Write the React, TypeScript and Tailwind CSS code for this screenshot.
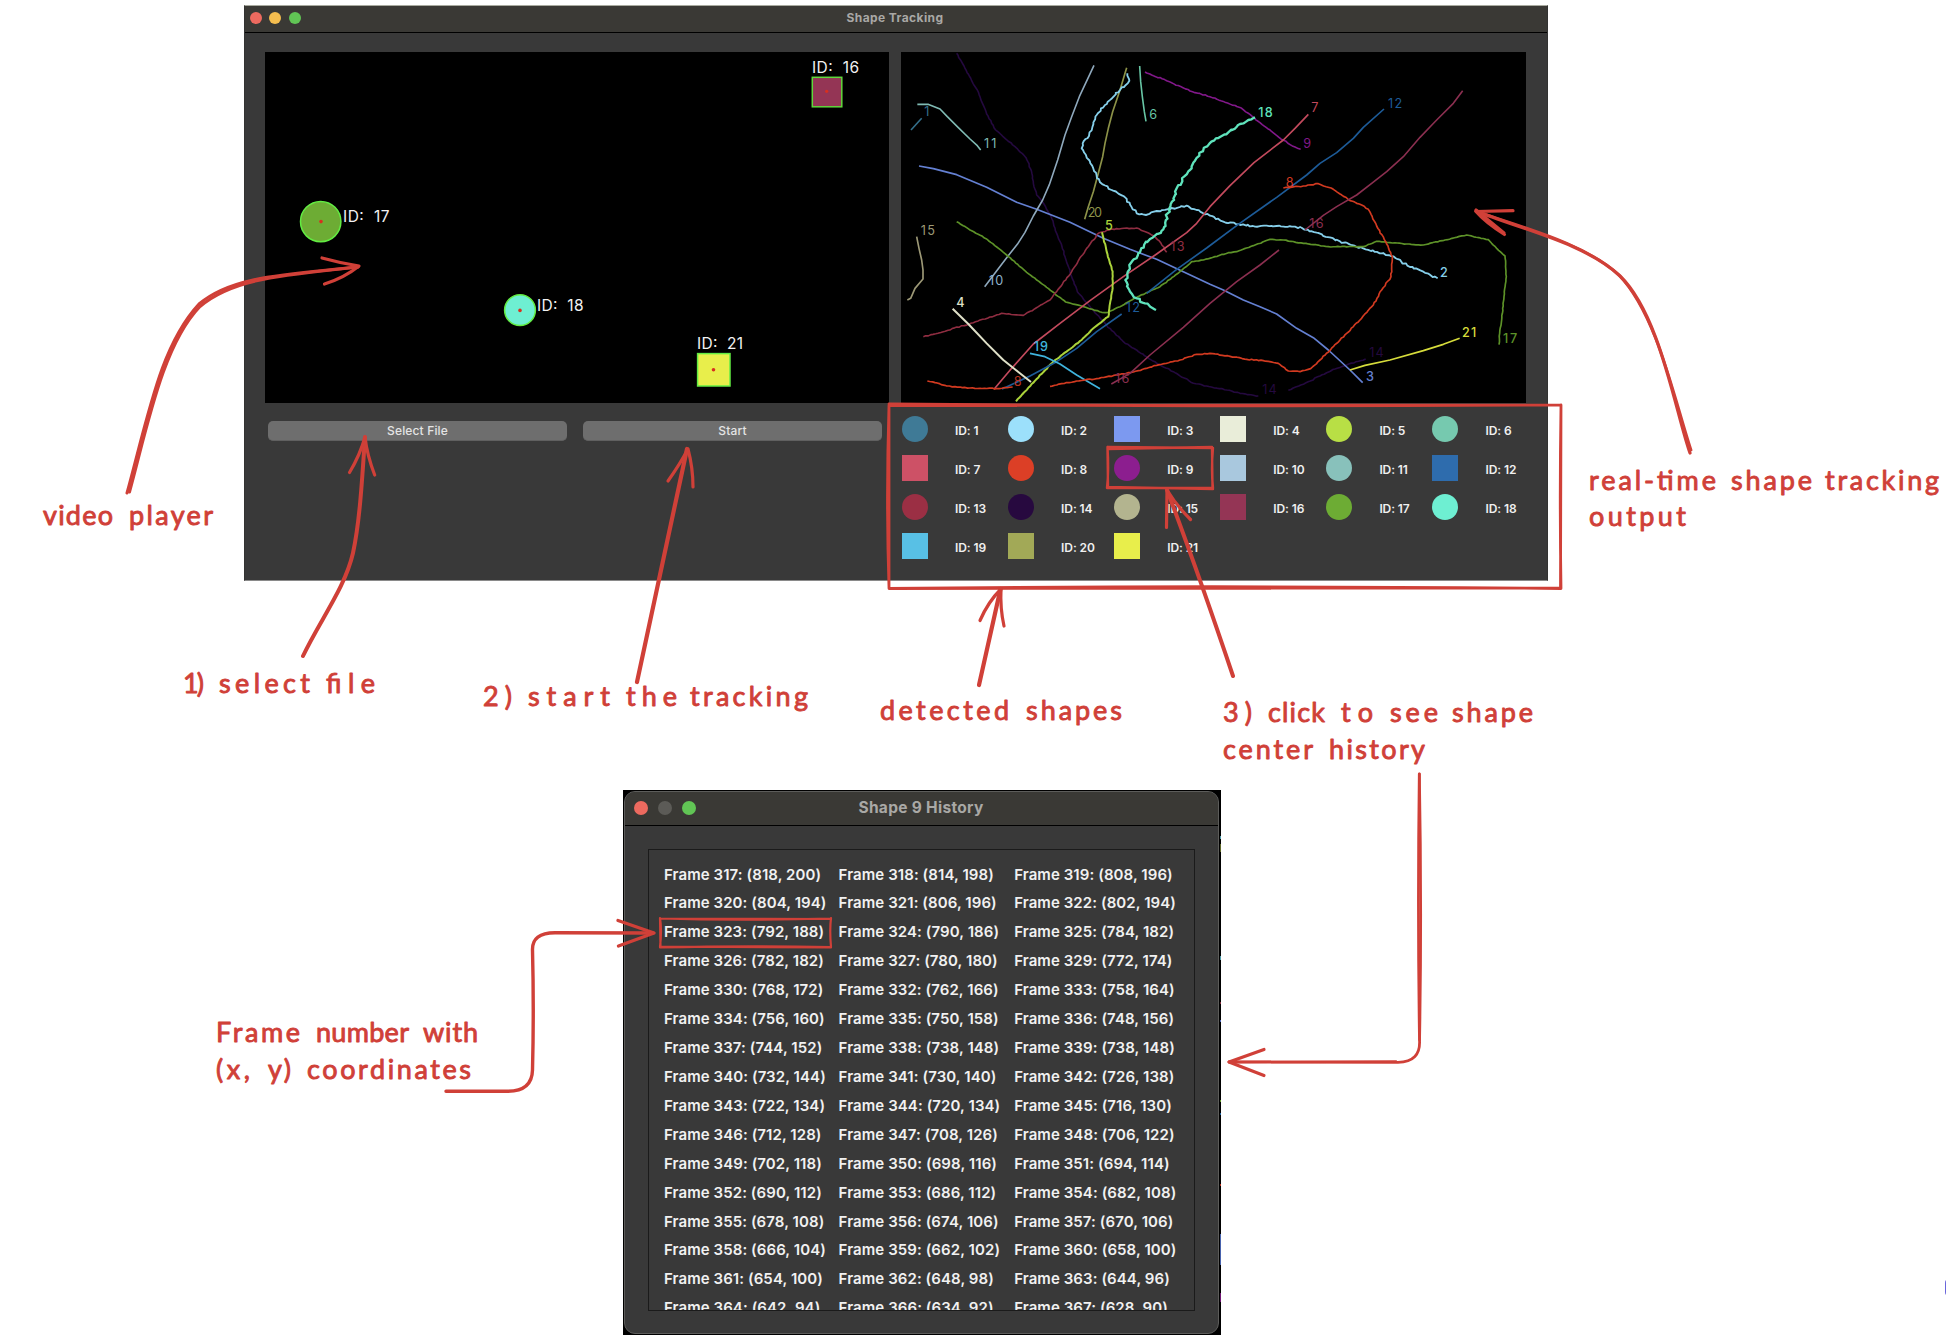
import React from "react";

type Kind = "circle" | "square";
type Shape = { id: number; kind: Kind; color: string };

const shapes: Shape[] = [
  { id: 1, kind: "circle", color: "#3f7a96" },
  { id: 2, kind: "circle", color: "#9ce0fb" },
  { id: 3, kind: "square", color: "#7c99f0" },
  { id: 4, kind: "square", color: "#e9edd9" },
  { id: 5, kind: "circle", color: "#b8df45" },
  { id: 6, kind: "circle", color: "#76c9af" },
  { id: 7, kind: "square", color: "#cd5166" },
  { id: 8, kind: "circle", color: "#dc3f26" },
  { id: 9, kind: "circle", color: "#8c1e8f" },
  { id: 10, kind: "square", color: "#a9c8de" },
  { id: 11, kind: "circle", color: "#88c1bb" },
  { id: 12, kind: "square", color: "#2e6cad" },
  { id: 13, kind: "circle", color: "#9b2f44" },
  { id: 14, kind: "circle", color: "#27093f" },
  { id: 15, kind: "circle", color: "#b3b48f" },
  { id: 16, kind: "square", color: "#943555" },
  { id: 17, kind: "circle", color: "#6dac34" },
  { id: 18, kind: "circle", color: "#6eefd2" },
  { id: 19, kind: "square", color: "#58c0e5" },
  { id: 20, kind: "square", color: "#a2a957" },
  { id: 21, kind: "square", color: "#e8ee4b" },
];

type Track = { color: string; pts: number[]; w?: number; rough?: number };

const tracks: Track[] = [
  { color: "#24093f", pts: [200,40,222,78,245,122,262,150,275,185,290,222,317,270,345,295,375,320,408,353,424,392,432,440,440,465,462,492,485,535,500,580,514,612,525,650,545,710,562,755,600,800,650,856,700,905,745,935,800,970,850,995,910,1030,950,1038,1010,1050,1050,1060,1105,1068], rough: 1.5 },
  { color: "#24093f", pts: [1195,1051,1240,1033,1290,1008,1335,987,1370,975,1427,957], rough: 1.5 },
  { color: "#34708c", pts: [63,270,95,235] },
  { color: "#7fbab3", pts: [82,193,114,193,150,207,172,230,205,263,240,297,262,317,272,330] },
  { color: "#6480d2", pts: [87,378,130,386,200,404,290,442,380,487,440,508,540,547,640,595,720,628,800,658,880,695,960,733,1000,750,1060,780,1110,800,1160,822,1220,865,1270,893,1315,930,1380,990,1418,1028], w: 5 },
  { color: "#8fa9bd", pts: [612,76,568,170,545,230,525,285,503,360,478,434,458,480,430,528,405,577,382,613,350,653,318,695,284,740] },
  { color: "#8c9248", pts: [710,83,690,150,668,215,655,265,645,310,638,350,625,400,610,455,595,500,584,538], w: 5 },
  { color: "#86cfea", pts: [712,100,718,122,690,150,645,195,620,225,607,262,597,288,578,310,575,325,600,365,630,427,665,450,703,470,740,520,768,525,800,513,840,508,890,497,920,510,960,527,1000,545,1045,552,1095,560,1130,557,1215,560,1280,578,1350,604,1420,625,1475,640,1510,649,1552,677,1600,695,1643,715], w: 5.5, rough: 3 },
  { color: "#67c6a5", pts: [749,78,752,125,757,170,763,215,768,244] },
  { color: "#82188a", pts: [765,96,830,122,900,153,960,170,1055,205,1110,248,1180,301,1215,321,1232,328], rough: 1.5 },
  { color: "#9c9876", pts: [80,590,87,625,95,660,99,690,99,717,75,745,62,775,52,780], w: 5 },
  { color: "#5d9228", pts: [200,545,245,572,290,597,350,645,410,697,470,742,527,786,580,800,635,817,655,817,690,800,740,772,810,740,870,695,905,665,940,660,1015,638,1040,635,1090,617,1140,598,1180,600,1240,610,1315,620,1420,620,1460,604,1500,608,1550,612,1600,615,1665,600,1730,585,1795,599,1820,625,1845,648,1849,710,1842,770,1835,840,1829,880,1827,914], w: 5, rough: 1 },
  { color: "#8f2d41", pts: [100,890,160,875,250,848,335,820,400,826,445,800,480,780,500,755,545,695,590,625,625,580,665,567,740,564,790,587,812,608,830,637], rough: 1.5 },
  { color: "#c34a5d", pts: [312,1048,365,985,430,912,510,850,600,782,700,710,800,642,890,578,920,550,960,500,1020,437,1092,368,1150,323,1180,300,1215,265,1255,223], w: 5 },
  { color: "#abd33b", pts: [636,577,650,635,668,695,668,745,660,790,655,830,610,865,575,900,490,965,440,1017,378,1084], w: 6, rough: 1 },
  { color: "#1d5b98", pts: [770,760,860,688,950,624,1045,553,1160,472,1250,405,1290,370,1340,338,1390,295,1420,262,1482,207], w: 5 },
  { color: "#1d5b98", pts: [336,1047,420,1008,500,965,560,925,620,875,695,822], w: 5 },
  { color: "#dfe0c8", pts: [188,806,235,852,290,910,340,960,385,996,423,1026], w: 6 },
  { color: "#3fb4dd", pts: [420,940,465,950,510,972,560,1005,630,1046], w: 5 },
  { color: "#d23a20", pts: [112,1023,135,1028,170,1038,195,1040,240,1044,320,1046,368,1041], w: 5, rough: 1.5 },
  { color: "#d23a20", pts: [480,1039,515,1031,560,1023,620,1016,730,996,800,976,870,960,920,943,960,940,1020,949,1070,958,1120,962,1165,970,1195,993,1230,995,1262,986,1290,960,1330,920,1370,880,1410,840,1450,795,1475,750,1503,710,1507,650,1487,605,1460,558,1435,508,1415,495,1380,482,1330,448,1285,431,1240,438,1180,444], w: 5, rough: 1.5 },
  { color: "#8b2f50", pts: [1718,152,1690,190,1640,240,1590,292,1540,350,1490,395,1445,430,1400,465,1340,500,1300,526,1245,570] },
  { color: "#8b2f50", pts: [1167,630,1110,675,1040,725,960,790,880,862,780,945,720,1000,664,1032] },
  { color: "#5fe3bc", pts: [1095,232,1075,240,1050,252,1015,277,985,294,955,315,935,335,915,362,905,385,882,410,860,445,846,485,833,520,820,568,780,597,745,640,718,675,712,700,706,720,718,750,740,775,765,790,798,810], w: 7, rough: 4 },
  { color: "#d6dc3b", pts: [1380,990,1425,976,1500,960,1600,932,1660,913,1709,895], w: 5 },
];

const trackLabels: { n: string; x: number; y: number; color: string; bold?: boolean }[] = [
  { n: "1", x: 103, y: 228, color: "#34708c" },
  { n: "11", x: 282, y: 325, color: "#7fbab3" },
  { n: "6", x: 778, y: 238, color: "#67c6a5" },
  { n: "15", x: 92, y: 586, color: "#9c9876" },
  { n: "10", x: 297, y: 735, color: "#8fb2cc" },
  { n: "20", x: 593, y: 532, color: "#8c9248" },
  { n: "5", x: 645, y: 571, color: "#abd33b", bold: true },
  { n: "13", x: 841, y: 633, color: "#8f2d41" },
  { n: "4", x: 199, y: 801, color: "#dfe0c8", bold: true },
  { n: "12", x: 707, y: 817, color: "#1d5b98" },
  { n: "19", x: 431, y: 934, color: "#3fb4dd", bold: true },
  { n: "8", x: 371, y: 1037, color: "#b5321f" },
  { n: "16", x: 675, y: 1030, color: "#8b2f50" },
  { n: "18", x: 1105, y: 230, color: "#5fe3bc", bold: true },
  { n: "7", x: 1264, y: 216, color: "#c34a5d" },
  { n: "12", x: 1494, y: 204, color: "#1d5b98" },
  { n: "9", x: 1240, y: 323, color: "#82188a" },
  { n: "8", x: 1187, y: 440, color: "#d23a20" },
  { n: "16", x: 1258, y: 565, color: "#8b2f50" },
  { n: "2", x: 1650, y: 710, color: "#86cfea", bold: true },
  { n: "21", x: 1716, y: 891, color: "#d6dc3b", bold: true },
  { n: "17", x: 1839, y: 908, color: "#5d9228", bold: true },
  { n: "14", x: 1438, y: 952, color: "#24093f" },
  { n: "14", x: 1117, y: 1063, color: "#24093f" },
  { n: "3", x: 1428, y: 1023, color: "#6480d2", bold: true },
];

/** Builds a polyline; `rough` adds the small wobble of a noisy centre estimate. */
function trackPath(pts: number[], rough = 0) {
  let d = `M${pts[0]} ${pts[1]}`;
  let k = pts[0];
  for (let i = 2; i < pts.length; i += 2) {
    const x0 = pts[i - 2];
    const y0 = pts[i - 1];
    const x1 = pts[i];
    const y1 = pts[i + 1];
    if (rough) {
      const steps = Math.max(1, Math.floor(Math.hypot(x1 - x0, y1 - y0) / 7));
      for (let s = 1; s < steps; s++) {
        k = (k * 73 + 41) % 997;
        const n = (k / 997 - 0.5) * 2 * rough;
        const m = (((k * 31) % 997) / 997 - 0.5) * 2 * rough;
        d += `L${(x0 + ((x1 - x0) * s) / steps + n).toFixed(1)} ${(y0 + ((y1 - y0) * s) / steps + m).toFixed(1)}`;
      }
    }
    d += `L${x1} ${y1}`;
  }
  return d;
}

function TrackPlot() {
  return (
    <svg viewBox="33 36 1875 1053" className="block h-[351px] w-[625px] bg-black" fill="none">
      {tracks.map((t, i) => (
        <path key={i} d={trackPath(t.pts, t.rough)} stroke={t.color} strokeWidth={t.w ?? 4.8} strokeLinejoin="round" />
      ))}
      {trackLabels.map((l, i) => (
        <text
          key={i}
          x={l.x}
          y={l.y}
          fill={l.color}
          className="font-['Inter',sans-serif] text-[38px]"
          fontWeight={l.bold ? 500 : 400}
          textLength={l.n.length === 2 ? (l.n === "11" ? 37 : 43) : undefined}
        >
          {l.n}
        </text>
      ))}
    </svg>
  );
}

function VideoFrame() {
  const label = "font-['Inter',sans-serif] text-[15.5px]";
  return (
    <svg viewBox="265 52 624 351" className="block h-[351px] w-[624px] bg-black">
      <rect x="812.3" y="77.3" width="29.5" height="29.5" fill="#943555" stroke="#5fd83c" strokeWidth="1.5" />
      <circle cx="320.7" cy="221.6" r="20.2" fill="#6dac34" stroke="#62ec42" strokeWidth="1.5" />
      <circle cx="520" cy="310.2" r="15.4" fill="#6eefd2" stroke="#62ec42" strokeWidth="1.5" />
      <rect x="697.6" y="353.6" width="32.4" height="32.4" fill="#e8ee4b" stroke="#62ec42" strokeWidth="1.5" />
      <g fill="#d8301f">
        <circle cx="826.7" cy="91.3" r="1.6" />
        <circle cx="321" cy="221.6" r="1.8" />
        <circle cx="520" cy="310.4" r="1.8" />
        <circle cx="713.5" cy="369.8" r="1.8" />
      </g>
      <g fill="#f2f2f2">
        <text x="812" y="73" textLength="47" className={label} xmlSpace="preserve">ID:  16</text>
        <text x="343" y="222.3" textLength="46.5" className={label} xmlSpace="preserve">ID:  17</text>
        <text x="537" y="311.2" textLength="46.5" className={label} xmlSpace="preserve">ID:  18</text>
        <text x="697" y="349.4" textLength="46" className={label} xmlSpace="preserve">ID:  21</text>
      </g>
    </svg>
  );
}

function MainWindow() {
  return (
    <section className="absolute left-[244px] top-[5px] flex h-[576px] w-[1304px] flex-col border border-[#1c1c1b]/20 border-b-[#8a8a8a] border-t-[#a9aba0] bg-[#393939]">
      <header className="relative flex h-[27px] shrink-0 items-center justify-center border-b border-black bg-[#3a3935]">
        <div className="absolute left-[4.5px] top-[6px] flex gap-[7.7px]">
          <span className="size-[12px] rounded-full bg-[#ed6a5f]" />
          <span className="size-[12px] rounded-full bg-[#f5be4f]" />
          <span className="size-[12px] rounded-full bg-[#61c555]" />
        </div>
        <h1 className="relative left-[-1px] top-[-1px] text-[12px] font-bold tracking-[0.4px] text-[#a9a8a5]">Shape Tracking</h1>
      </header>
      <div className="grid grid-cols-[624px_625px] gap-x-3 pl-5 pt-[19px]">
        <div className="flex flex-col">
          <VideoFrame />
          <div className="flex gap-4 pl-[3px] pt-[18px]">
            <button className="h-5 w-[299px] rounded-[5px] border-b border-[#606060] bg-[#6e6e6e] text-center text-[12px] font-medium leading-[19px] tracking-[0.15px] text-[#e4e4e4]">
              Select File
            </button>
            <button className="h-5 w-[299px] rounded-[5px] border-b border-[#606060] bg-[#6e6e6e] text-center text-[12px] font-medium leading-[19px] tracking-[0.15px] text-[#e4e4e4]">
              Start
            </button>
          </div>
        </div>
        <div className="flex flex-col">
          <TrackPlot />
          <ul className="grid grid-cols-[repeat(6,106.1px)] auto-rows-[39px] pt-[13px] pl-[1px]">
            {shapes.map((s) => (
              <li key={s.id} className="flex h-[26px] items-center gap-[27px]">
                <span
                  className={s.kind === "circle" ? "size-[26px] rounded-full" : "size-[26px]"}
                  style={{ backgroundColor: s.color }}
                />
                <span className="whitespace-nowrap pt-[4px] text-[12px] font-semibold leading-4 tracking-[-0.1px] text-[#f0f0f0]">ID: {s.id}</span>
              </li>
            ))}
          </ul>
        </div>
      </div>
    </section>
  );
}

const history: [number, number, number][] = [
  [317, 818, 200], [318, 814, 198], [319, 808, 196],
  [320, 804, 194], [321, 806, 196], [322, 802, 194],
  [323, 792, 188], [324, 790, 186], [325, 784, 182],
  [326, 782, 182], [327, 780, 180], [329, 772, 174],
  [330, 768, 172], [332, 762, 166], [333, 758, 164],
  [334, 756, 160], [335, 750, 158], [336, 748, 156],
  [337, 744, 152], [338, 738, 148], [339, 738, 148],
  [340, 732, 144], [341, 730, 140], [342, 726, 138],
  [343, 722, 134], [344, 720, 134], [345, 716, 130],
  [346, 712, 128], [347, 708, 126], [348, 706, 122],
  [349, 702, 118], [350, 698, 116], [351, 694, 114],
  [352, 690, 112], [353, 686, 112], [354, 682, 108],
  [355, 678, 108], [356, 674, 106], [357, 670, 106],
  [358, 666, 104], [359, 662, 102], [360, 658, 100],
  [361, 654, 100], [362, 648, 98], [363, 644, 96],
  [364, 642, 94], [366, 634, 92], [367, 628, 90],
];

function HistoryWindow() {
  return (
    <section className="absolute left-[623px] top-[790px] h-[545px] w-[598px] bg-black pl-px pr-[2px] pt-px">
      <svg className="absolute right-0 top-0 h-[545px] w-px" viewBox="0 0 1 545">
        <rect x="0" y="444" width="2" height="31" fill="#4762ad" />
        <rect x="0" y="46" width="2" height="3" fill="#4d9aa8" />
        <rect x="0" y="54" width="2" height="8" fill="#5d6628" />
        <rect x="0" y="166" width="2" height="4" fill="#4d9aa8" />
        <rect x="0" y="212" width="2" height="2" fill="#7d2a3a" />
        <rect x="0" y="230" width="2" height="2" fill="#5067b8" />
        <rect x="0" y="310" width="2" height="2" fill="#5d9228" />
        <rect x="0" y="323" width="2" height="2" fill="#1d5b98" />
        <rect x="0" y="394" width="2" height="2" fill="#b5321f" />
        <rect x="0" y="503" width="2" height="9" fill="#6f1672" />
      </svg>
      <div className="flex h-[543px] flex-col overflow-hidden rounded-[11px] border border-[#5c5c5a] bg-[#393939]">
        <header className="relative flex h-[34px] shrink-0 items-center justify-center border-b border-black bg-[#3a3935]">
          <div className="absolute left-[8.5px] top-[8.5px] flex gap-[9.5px]">
            <span className="size-[14.5px] rounded-full bg-[#ed6a5f]" />
            <span className="size-[14.5px] rounded-full bg-[#5c5b57]" />
            <span className="size-[14.5px] rounded-full bg-[#61c555]" />
          </div>
          <h2 className="relative left-[-0.5px] top-[-1px] text-[15.5px] font-bold tracking-[0.3px] text-[#a9a8a5]">Shape 9 History</h2>
        </header>
        <div className="ml-[23px] mt-[23px] h-[462px] w-[547px] overflow-hidden border border-[#1b1b1b] pl-[15px] pt-[9.5px]">
          <div className="grid auto-rows-[28.93px] grid-cols-[174.6px_175.6px_175px]">
            {history.map(([f, x, y]) => (
              <span key={f} className="whitespace-nowrap text-[15px] font-semibold leading-[29px] tracking-[0.08px] text-[#f1f1f1]">
                Frame {f}: ({x}, {y})
              </span>
            ))}
          </div>
        </div>
      </div>
    </section>
  );
}

type Word = [text: string, from: number, to: number];
const notes: { y: number; words: Word[] }[] = [
  { y: 525, words: [["video", 43, 113], ["player", 129, 213]] },
  { y: 693, words: [["1)", 183, 204], ["select", 219, 310], ["file", 326, 375]] },
  { y: 706, words: [["2)", 483, 512], ["start", 528, 610], ["the", 626, 677], ["tracking", 690, 808]] },
  { y: 720, words: [["detected", 880, 1009], ["shapes", 1026, 1122]] },
  { y: 722, words: [["3)", 1223, 1252], ["click", 1268, 1325], ["to", 1341, 1373], ["see", 1390, 1438], ["shape", 1452, 1533]] },
  { y: 759, words: [["center", 1223, 1313], ["history", 1329, 1425]] },
  { y: 490, words: [["real-time", 1589, 1716], ["shape", 1731, 1812], ["tracking", 1825, 1939]] },
  { y: 526, words: [["output", 1589, 1686]] },
  { y: 1042, words: [["Frame", 216, 300], ["number", 316, 409], ["with", 423, 478]] },
  { y: 1079, words: [["(x,", 216, 250], ["y)", 268, 291], ["coordinates", 307, 471]] },
];

function Annotations() {
  return (
    <svg className="pointer-events-none absolute inset-0 h-[1340px] w-[1946px]" viewBox="0 0 1946 1340" fill="none" stroke="#d04038" strokeWidth="3.2" strokeLinecap="round" strokeLinejoin="round">
      {/* detected shapes frame */}
      <path d="M889 405.500L1561 405M889 404Q1200 407 1561 405M1561 405Q1559.500 500 1561 588M1561 405L1560.500 588M1561 588.500Q1200 585 889 588.500M1561 588L889 588.500M889 588Q886 500 889 405L889 588" strokeWidth="2.8" />
      {/* single legend entry */}
      <path d="M1108 447L1213 448M1108 449L1212 447M1213 448Q1211 470 1213 488M1212 448L1212.500 488M1213 488L1108 488M1213 489L1107 487M1107 488Q1109 470 1107.500 447L1108 488" strokeWidth="2.4" />
      {/* single history entry */}
      <path d="M660 918.500Q740 921 831 918.500M660 918.500L831 919M831 918Q829.500 930 831 947M831 947Q740 945.500 660 947.500M831 947.500L660 946.500M660 947Q662 930 660 918L660.500 947" strokeWidth="2.2" />

      {/* video player */}
      <path d="M127 493C149 412 161 345 199 304C232 276 283 275 358 267" strokeWidth="3" />
      <path d="M129.500 492C148 424 163 345 200 306.500C234 277.500 287 275 358 267" strokeWidth="3" />
      <path d="M322 258Q340 263 359 266Q344 278 324.500 284" />
      {/* select file */}
      <path d="M303 656C320 620 345 588 353 553C360 520 362 480 365 437" strokeWidth="4" />
      <path d="M349.500 472.500Q360 455 365 437Q367 455 374.700 475" />
      {/* start */}
      <path d="M637 682L687 449" strokeWidth="4.200" />
      <path d="M668 481Q680 464 688 449Q693 468 693 487" />
      {/* detected shapes */}
      <path d="M979 685L1000.500 589" strokeWidth="4.200" />
      <path d="M980 620.500Q988 602 1001 589Q1000 608 1004 626" />
      {/* shape click */}
      <path d="M1233 676Q1198 572 1167 490" strokeWidth="4" />
      <path d="M1166.500 527.500L1167 490Q1176 505 1190.500 519.500" />
      {/* real-time output */}
      <path d="M1690 453C1675 410 1660 315 1620 276C1585 243 1520 229 1476 211" strokeWidth="3.200" />
      <path d="M1691 450C1674 398 1657 315 1619 275C1583 242 1520 227 1476 211" strokeWidth="2.800" />
      <path d="M1513 210.700L1476 211.500Q1485 222 1504.500 234.500M1476 210L1504 233" strokeWidth="3.200" />
      {/* frame number */}
      <path d="M446 1091.300H508Q532 1091 532.500 1070Q534 1010 532.500 950Q532 933 555 932.800L653 933" strokeWidth="3.400" />
      <path d="M618 920.500L654 933L618.500 946" strokeWidth="3.400" />
      {/* history link */}
      <path d="M1419.300 774Q1417.500 910 1419.500 1040Q1421 1062 1398 1062.300L1229 1062" strokeWidth="2.800" />
      <path d="M1419.500 774Q1422 910 1419.700 1040M1229 1062L1396 1061.500" strokeWidth="2.500" />
      <path d="M1264 1049.500L1229 1062L1264 1075.500" />

      <g fill="#d04038" strokeWidth="0.9" className="font-['Lato',sans-serif] text-[27px]">
        {notes.map((n) => (
          <text key={n.y} y={n.y}>
            {n.words.map(([w, from, to]) => (
              <tspan key={w} x={from} textLength={to - from} lengthAdjust="spacing">
                {w}
              </tspan>
            ))}
          </text>
        ))}
      </g>
    </svg>
  );
}

export default function App() {
  return (
    <main className="relative h-[1340px] w-[1946px] overflow-hidden bg-white font-['Inter',sans-serif]">
      <MainWindow />
      <HistoryWindow />
      <Annotations />
      <span className="absolute left-[1945px] top-[1279px] h-[17px] w-[10px] rounded-l border-l border-[#6965db] bg-white" />
    </main>
  );
}
